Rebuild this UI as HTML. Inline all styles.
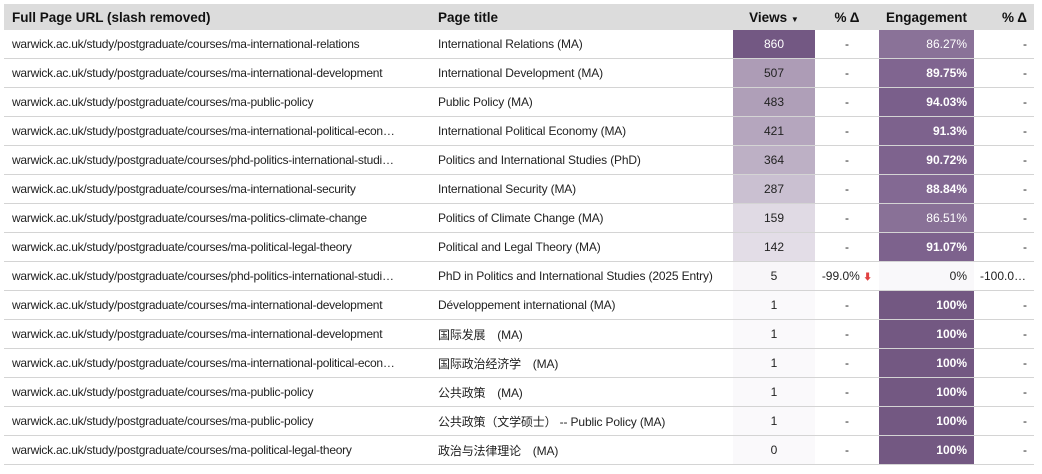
<!DOCTYPE html>
<html><head><meta charset="utf-8"><style>
body{margin:0;background:#fff;width:1042px;height:474px;overflow:hidden;font-family:"Liberation Sans","Noto Sans CJK SC",sans-serif;color:#222}
table{position:absolute;left:4px;top:4px;border-collapse:collapse;table-layout:fixed;width:1030px}
th{background:#dcdcdc;height:26px;font-size:13.5px;font-weight:bold;padding:0;color:#111;white-space:nowrap}
td{height:28px;border-bottom:1px solid #d4d4d4;font-size:12px;padding:0;white-space:nowrap;overflow:hidden;text-overflow:ellipsis}
td.u{padding-left:8px;letter-spacing:-0.25px}
td.t{padding-left:6px;letter-spacing:-0.15px}
th.l{text-align:left;padding-left:8px}
th.lt{text-align:left;padding-left:6px}
.c{text-align:center}
.r{text-align:right;padding-right:7px}
.w{color:#fff}
.b{font-weight:bold}
.ar{color:#e04040;font-size:9px}
</style></head><body>
<table>
<colgroup><col style="width:428px"><col style="width:301px"><col style="width:82px"><col style="width:64px"><col style="width:95px"><col style="width:60px"></colgroup>
<tr><th class="l">Full Page URL (slash removed)</th><th class="lt">Page title</th><th class="c">Views <span style="font-size:8px">▼</span></th><th class="c">% Δ</th><th class="c">Engagement</th><th class="r">% Δ</th></tr>
<tr><td class="u">warwick.ac.uk/study/postgraduate/courses/ma-international-relations</td><td class="t">International Relations (MA)</td><td class="c w" style="background:#735883">860</td><td class="c">-</td><td class="r w" style="background:#8a7298">86.27%</td><td class="r">-</td></tr>
<tr><td class="u">warwick.ac.uk/study/postgraduate/courses/ma-international-development</td><td class="t">International Development (MA)</td><td class="c" style="background:#ad9cb6">507</td><td class="c">-</td><td class="r w b" style="background:#806590">89.75%</td><td class="r">-</td></tr>
<tr><td class="u">warwick.ac.uk/study/postgraduate/courses/ma-public-policy</td><td class="t">Public Policy (MA)</td><td class="c" style="background:#af9fb8">483</td><td class="c">-</td><td class="r w b" style="background:#7a5f8b">94.03%</td><td class="r">-</td></tr>
<tr><td class="u">warwick.ac.uk/study/postgraduate/courses/ma-international-political-econ…</td><td class="t">International Political Economy (MA)</td><td class="c" style="background:#b5a6be">421</td><td class="c">-</td><td class="r w b" style="background:#7d628d">91.3%</td><td class="r">-</td></tr>
<tr><td class="u">warwick.ac.uk/study/postgraduate/courses/phd-politics-international-studi…</td><td class="t">Politics and International Studies (PhD)</td><td class="c" style="background:#bdb0c5">364</td><td class="c">-</td><td class="r w b" style="background:#7e638e">90.72%</td><td class="r">-</td></tr>
<tr><td class="u">warwick.ac.uk/study/postgraduate/courses/ma-international-security</td><td class="t">International Security (MA)</td><td class="c" style="background:#cac0d1">287</td><td class="c">-</td><td class="r w b" style="background:#836993">88.84%</td><td class="r">-</td></tr>
<tr><td class="u">warwick.ac.uk/study/postgraduate/courses/ma-politics-climate-change</td><td class="t">Politics of Climate Change (MA)</td><td class="c" style="background:#e0dae4">159</td><td class="c">-</td><td class="r w" style="background:#897197">86.51%</td><td class="r">-</td></tr>
<tr><td class="u">warwick.ac.uk/study/postgraduate/courses/ma-political-legal-theory</td><td class="t">Political and Legal Theory (MA)</td><td class="c" style="background:#e3dde7">142</td><td class="c">-</td><td class="r w b" style="background:#7d628d">91.07%</td><td class="r">-</td></tr>
<tr><td class="u">warwick.ac.uk/study/postgraduate/courses/phd-politics-international-studi…</td><td class="t">PhD in Politics and International Studies (2025 Entry)</td><td class="c" style="background:#f8f6f9">5</td><td class="c">-99.0% <span class="ar">⬇</span></td><td class="r" style="background:#f9f8fa">0%</td><td class="r" style="text-align:left;padding-left:6px">-100.0…</td></tr>
<tr><td class="u">warwick.ac.uk/study/postgraduate/courses/ma-international-development</td><td class="t">Développement international (MA)</td><td class="c" style="background:#faf9fb">1</td><td class="c">-</td><td class="r w b" style="background:#735882">100%</td><td class="r">-</td></tr>
<tr><td class="u">warwick.ac.uk/study/postgraduate/courses/ma-international-development</td><td class="t">国际发展　(MA)</td><td class="c" style="background:#faf9fb">1</td><td class="c">-</td><td class="r w b" style="background:#735882">100%</td><td class="r">-</td></tr>
<tr><td class="u">warwick.ac.uk/study/postgraduate/courses/ma-international-political-econ…</td><td class="t">国际政治经济学　(MA)</td><td class="c" style="background:#faf9fb">1</td><td class="c">-</td><td class="r w b" style="background:#735882">100%</td><td class="r">-</td></tr>
<tr><td class="u">warwick.ac.uk/study/postgraduate/courses/ma-public-policy</td><td class="t">公共政策　(MA)</td><td class="c" style="background:#faf9fb">1</td><td class="c">-</td><td class="r w b" style="background:#735882">100%</td><td class="r">-</td></tr>
<tr><td class="u">warwick.ac.uk/study/postgraduate/courses/ma-public-policy</td><td class="t">公共政策（文学硕士） -- Public Policy (MA)</td><td class="c" style="background:#faf9fb">1</td><td class="c">-</td><td class="r w b" style="background:#735882">100%</td><td class="r">-</td></tr>
<tr><td class="u">warwick.ac.uk/study/postgraduate/courses/ma-political-legal-theory</td><td class="t">政治与法律理论　(MA)</td><td class="c" style="background:#faf9fb">0</td><td class="c">-</td><td class="r w b" style="background:#735882">100%</td><td class="r">-</td></tr>
</table>
</body></html>
